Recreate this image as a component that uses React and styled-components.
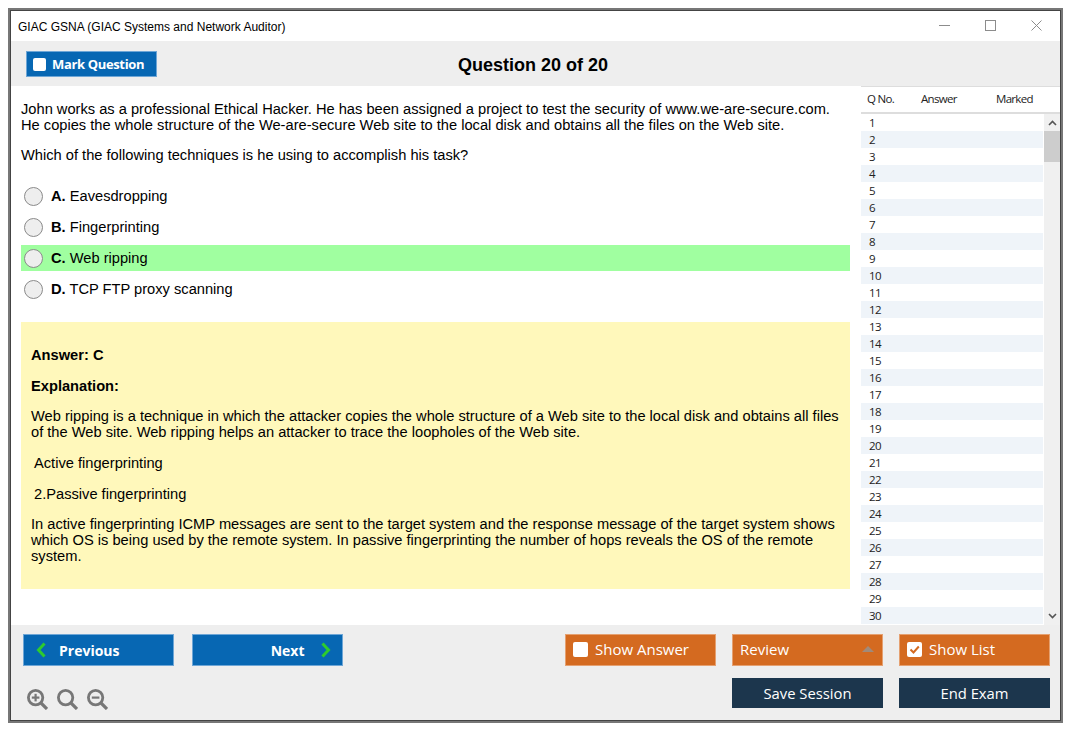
import React from 'react'
import styled, { createGlobalStyle } from 'styled-components'

const GlobalStyle = createGlobalStyle`
  html, body { margin: 0; padding: 0; background: #fff; }
  body { font-family: "Liberation Sans", Arial, sans-serif; color: #000; }
`

const Page = styled.div`
  padding: 8px;
`

const Window = styled.div`
  box-sizing: border-box;
  width: 1055px;
  height: 715px;
  border: 2px solid #777;
  outline: 1px solid #444;
  outline-offset: -3px;
  padding: 1px;
  display: flex;
  flex-direction: column;
  background: #fff;
`

const TitleBar = styled.div`
  box-sizing: border-box;
  height: 30px;
  flex: none;
  display: flex;
  align-items: center;
  justify-content: space-between;
  padding: 2px 18px 0 7px;
  font-size: 12px;
`

const WindowControls = styled.div`
  display: flex;
  align-items: center;
  gap: 35px;
  margin-top: -3px;
  color: #8c8c8c;
`

const Toolbar = styled.div`
  box-sizing: border-box;
  height: 45px;
  flex: none;
  background: #eee;
  display: flex;
  align-items: flex-start;
  padding: 10px 0 0 15px;
  position: relative;
`

const BaseButton = styled.div`
  box-sizing: border-box;
  display: flex;
  align-items: center;
  color: #fff;
  font-family: "Open Sans", sans-serif;
`

const MarkButton = styled(BaseButton)`
  width: 131px;
  height: 26px;
  background: #0767b3;
  border: 1px solid #6ea6d6;
  padding-left: 6px;
  gap: 6px;
  font-size: 13px;
  font-weight: 700;
  letter-spacing: -0.35px;
`

const QuestionTitle = styled.h1`
  position: absolute;
  left: 0;
  right: 5px;
  top: 14px;
  margin: 0;
  text-align: center;
  font-size: 18px;
  line-height: 21px;
  font-weight: 700;
`

const Box = styled.span`
  box-sizing: border-box;
  width: ${(p) => p.$size || 15}px;
  height: ${(p) => p.$size || 15}px;
  flex: none;
  border-radius: 2px;
  background: #fff;
  display: flex;
  align-items: center;
  justify-content: center;
`

const Main = styled.div`
  flex: 1;
  min-height: 0;
  display: flex;
`

const Content = styled.div`
  flex: 1;
  min-width: 0;
  padding: 15px 10px 0 10px;
`

const Paragraph = styled.p`
  margin: 0 0 14px;
  font-size: 14.67px;
  line-height: 16px;
`

const Options = styled.div`
  display: flex;
  flex-direction: column;
  gap: 5px;
  margin-top: 20px;
`

const Option = styled.div`
  height: 26px;
  display: flex;
  align-items: center;
  padding-left: 3px;
  gap: 8px;
  font-size: 14.67px;
  background: ${(p) => (p.$correct ? '#a0ffa0' : 'transparent')};
`

const Radio = styled.span`
  box-sizing: border-box;
  width: 19px;
  height: 19px;
  border-radius: 50%;
  border: 1px solid #8a8a8a;
  background: #eee;
`

const AnswerBox = styled.div`
  box-sizing: border-box;
  height: 267px;
  margin-top: 20px;
  padding: 25px 10px 0;
  background: #fff8bb;
`

const AnswerPara = styled.p`
  margin: 0 0 ${(p) => (p.$tight ? 14 : 15)}px;
  font-size: 14.67px;
  line-height: 16px;
  font-weight: ${(p) => (p.$bold ? 700 : 400)};
  padding-left: ${(p) => (p.$indent ? '3px' : '0')};
`

const ListPanel = styled.div`
  width: 199px;
  flex: none;
  display: flex;
  flex-direction: column;
  margin-left: 1px;
  font-family: "Open Sans", sans-serif;
  font-size: 11.5px;
  letter-spacing: -0.7px;
  color: #222;
  overflow: hidden;
`

const ListHeader = styled.div`
  box-sizing: border-box;
  height: 28px;
  flex: none;
  display: flex;
  align-items: center;
  padding-bottom: 2px;
  border-top: 1px solid #ddd;
  border-bottom: 2px solid #ddd;
`

const HeadCell = styled.span`
  width: ${(p) => p.$w}px;
  padding-left: ${(p) => p.$pad}px;
  box-sizing: border-box;
`

const ListBody = styled.div`
  flex: 1;
  min-height: 0;
  display: flex;
`

const Rows = styled.div`
  flex: 1;
  min-width: 0;
`

const Row = styled.div`
  height: 17px;
  line-height: 17px;
  padding-left: 8px;
  background: ${(p) => (p.$alt ? '#eff4f9' : '#fff')};
`

const Scrollbar = styled.div`
  width: 16px;
  margin-left: 1px;
  flex: none;
  background: #f0f0f0;
  display: flex;
  flex-direction: column;
  align-items: center;
  justify-content: space-between;
  position: relative;
  padding: 6px 0;
  box-sizing: border-box;
  color: #555;
`

const Thumb = styled.div`
  position: absolute;
  top: 17px;
  left: 0;
  width: 100%;
  height: 31px;
  background: #cdcdcd;
`

const Footer = styled.div`
  box-sizing: border-box;
  height: 95px;
  flex: none;
  background: #eee;
  padding: 9px 10px 0 12px;
  display: flex;
  flex-direction: column;
  gap: 12px;
`

const FooterRow = styled.div`
  display: flex;
  align-items: flex-start;
`

const NavGroup = styled.div`
  display: flex;
  gap: 18.5px;
`

const RightGroup = styled.div`
  display: flex;
  gap: 16px;
  margin-left: auto;
`

const NavButton = styled(BaseButton)`
  width: 150.5px;
  height: 32px;
  background: #0767b3;
  border: 1px solid #6ea6d6;
  padding: 0 11px 0 12px;
  font-size: 14px;
  font-weight: 700;
  gap: ${(p) => (p.$end ? 16 : 13)}px;
  justify-content: ${(p) => (p.$end ? 'flex-end' : 'flex-start')};
`

const OrangeButton = styled(BaseButton)`
  width: 151px;
  height: 32px;
  background: #d46a20;
  border: 1px solid #e5a070;
  padding: 0 7px 2px;
  gap: 7px;
  font-size: 15px;
  justify-content: ${(p) => (p.$between ? 'space-between' : 'flex-start')};
`

const DarkButton = styled(BaseButton)`
  width: 151px;
  height: 30px;
  padding-bottom: 1px;
  background: #1c364d;
  justify-content: center;
  font-size: 14.8px;
`

const ZoomIcons = styled.div`
  display: flex;
  gap: 9px;
  padding: 11px 0 0 4px;
  color: #777;
`

const Caret = styled.span`
  width: 0;
  height: 0;
  margin-right: 1px;
  border-left: 6px solid transparent;
  border-right: 6px solid transparent;
  border-bottom: 6px solid #a08a7a;
`

const Chevron = ({ left }) => (
  <svg width="10" height="16" viewBox="0 0 10 16" fill="none" stroke="#2ecb2e" strokeWidth="3">
    <path d={left ? 'M8.5 1.5 2.5 8l6 6.5' : 'M1.5 1.5 7.5 8l-6 6.5'} />
  </svg>
)

const ZoomIcon = ({ mark }) => (
  <svg width="21" height="21" viewBox="0 0 21 21" fill="none" stroke="currentColor">
    <circle cx="8.6" cy="8.6" r="7.2" strokeWidth="2.8" />
    <path d="M13.5 13.5 20 20" strokeWidth="3.2" />
    {mark && <path d="M4.8 8.6h7.6" strokeWidth="2.2" />}
    {mark === 'plus' && <path d="M8.6 4.8v7.6" strokeWidth="2.2" />}
  </svg>
)

const Check = () => (
  <svg width="11" height="11" viewBox="0 0 11 11" fill="none" stroke="#d46a20" strokeWidth="2">
    <path d="M1.5 5.5 4.5 8.5 9.8 2.5" />
  </svg>
)

const options = [
  ['A.', 'Eavesdropping'],
  ['B.', 'Fingerprinting'],
  ['C.', 'Web ripping'],
  ['D.', 'TCP FTP proxy scanning'],
]

const questionNumbers = Array.from({ length: 30 }, (_, i) => i + 1)

function App() {
  return (
    <Page>
      <GlobalStyle />
      <Window>
        <TitleBar>
          <span>GIAC GSNA (GIAC Systems and Network Auditor)</span>
          <WindowControls>
            <svg width="11" height="11" viewBox="0 0 11 11" stroke="currentColor" fill="none">
              <path d="M0 5.5h11" />
            </svg>
            <svg width="11" height="11" viewBox="0 0 11 11" stroke="currentColor" fill="none">
              <rect x="0.5" y="0.5" width="10" height="10" />
            </svg>
            <svg width="11" height="11" viewBox="0 0 11 11" stroke="currentColor" fill="none">
              <path d="M0.5 0.5l10 10M10.5 0.5l-10 10" />
            </svg>
          </WindowControls>
        </TitleBar>

        <Toolbar>
          <MarkButton>
            <Box $size={13} />
            Mark Question
          </MarkButton>
          <QuestionTitle>Question 20 of 20</QuestionTitle>
        </Toolbar>

        <Main>
          <Content>
            <Paragraph>
              John works as a professional Ethical Hacker. He has been assigned a project to test the security of www.we-are-secure.com.
              <br />
              He copies the whole structure of the We-are-secure Web site to the local disk and obtains all the files on the Web site.
            </Paragraph>
            <Paragraph>Which of the following techniques is he using to accomplish his task?</Paragraph>
            <Options>
              {options.map(([letter, text]) => (
                <Option key={letter} $correct={letter === 'C.'}>
                  <Radio />
                  <span>
                    <b>{letter}</b> {text}
                  </span>
                </Option>
              ))}
            </Options>
            <AnswerBox>
              <AnswerPara $bold>Answer: C</AnswerPara>
              <AnswerPara $bold $tight>Explanation:</AnswerPara>
              <AnswerPara>
                Web ripping is a technique in which the attacker copies the whole structure of a Web site to the local disk and obtains all files of the Web site. Web ripping helps an attacker to trace the loopholes of the Web site.
              </AnswerPara>
              <AnswerPara $indent>Active fingerprinting</AnswerPara>
              <AnswerPara $indent $tight>2.Passive fingerprinting</AnswerPara>
              <AnswerPara>
                In active fingerprinting ICMP messages are sent to the target system and the response message of the target system shows which OS is being used by the remote system. In passive fingerprinting the number of hops reveals the OS of the remote system.
              </AnswerPara>
            </AnswerBox>
          </Content>

          <ListPanel>
            <ListHeader>
              <HeadCell $w={60} $pad={6}>Q No.</HeadCell>
              <HeadCell $w={75} $pad={0}>Answer</HeadCell>
              <HeadCell $w={60} $pad={0}>Marked</HeadCell>
            </ListHeader>
            <ListBody>
              <Rows>
                {questionNumbers.map((n) => (
                  <Row key={n} $alt={n % 2 === 0}>{n}</Row>
                ))}
              </Rows>
              <Scrollbar>
                <svg width="9" height="6" viewBox="0 0 9 6" fill="none" stroke="currentColor" strokeWidth="1.6">
                  <path d="M1 5l3.5-3.5L8 5" />
                </svg>
                <Thumb />
                <svg width="9" height="6" viewBox="0 0 9 6" fill="none" stroke="currentColor" strokeWidth="1.6">
                  <path d="M1 1l3.5 3.5L8 1" />
                </svg>
              </Scrollbar>
            </ListBody>
          </ListPanel>
        </Main>

        <Footer>
          <FooterRow>
            <NavGroup>
              <NavButton>
                <Chevron left />
                Previous
              </NavButton>
              <NavButton $end>
                Next
                <Chevron />
              </NavButton>
            </NavGroup>
            <RightGroup>
              <OrangeButton>
                <Box />
                Show Answer
              </OrangeButton>
              <OrangeButton $between>
                Review
                <Caret />
              </OrangeButton>
              <OrangeButton>
                <Box>
                  <Check />
                </Box>
                Show List
              </OrangeButton>
            </RightGroup>
          </FooterRow>
          <FooterRow>
            <ZoomIcons>
              <ZoomIcon mark="plus" />
              <ZoomIcon />
              <ZoomIcon mark="minus" />
            </ZoomIcons>
            <RightGroup>
              <DarkButton>Save Session</DarkButton>
              <DarkButton>End Exam</DarkButton>
            </RightGroup>
          </FooterRow>
        </Footer>
      </Window>
    </Page>
  )
}

export default App
